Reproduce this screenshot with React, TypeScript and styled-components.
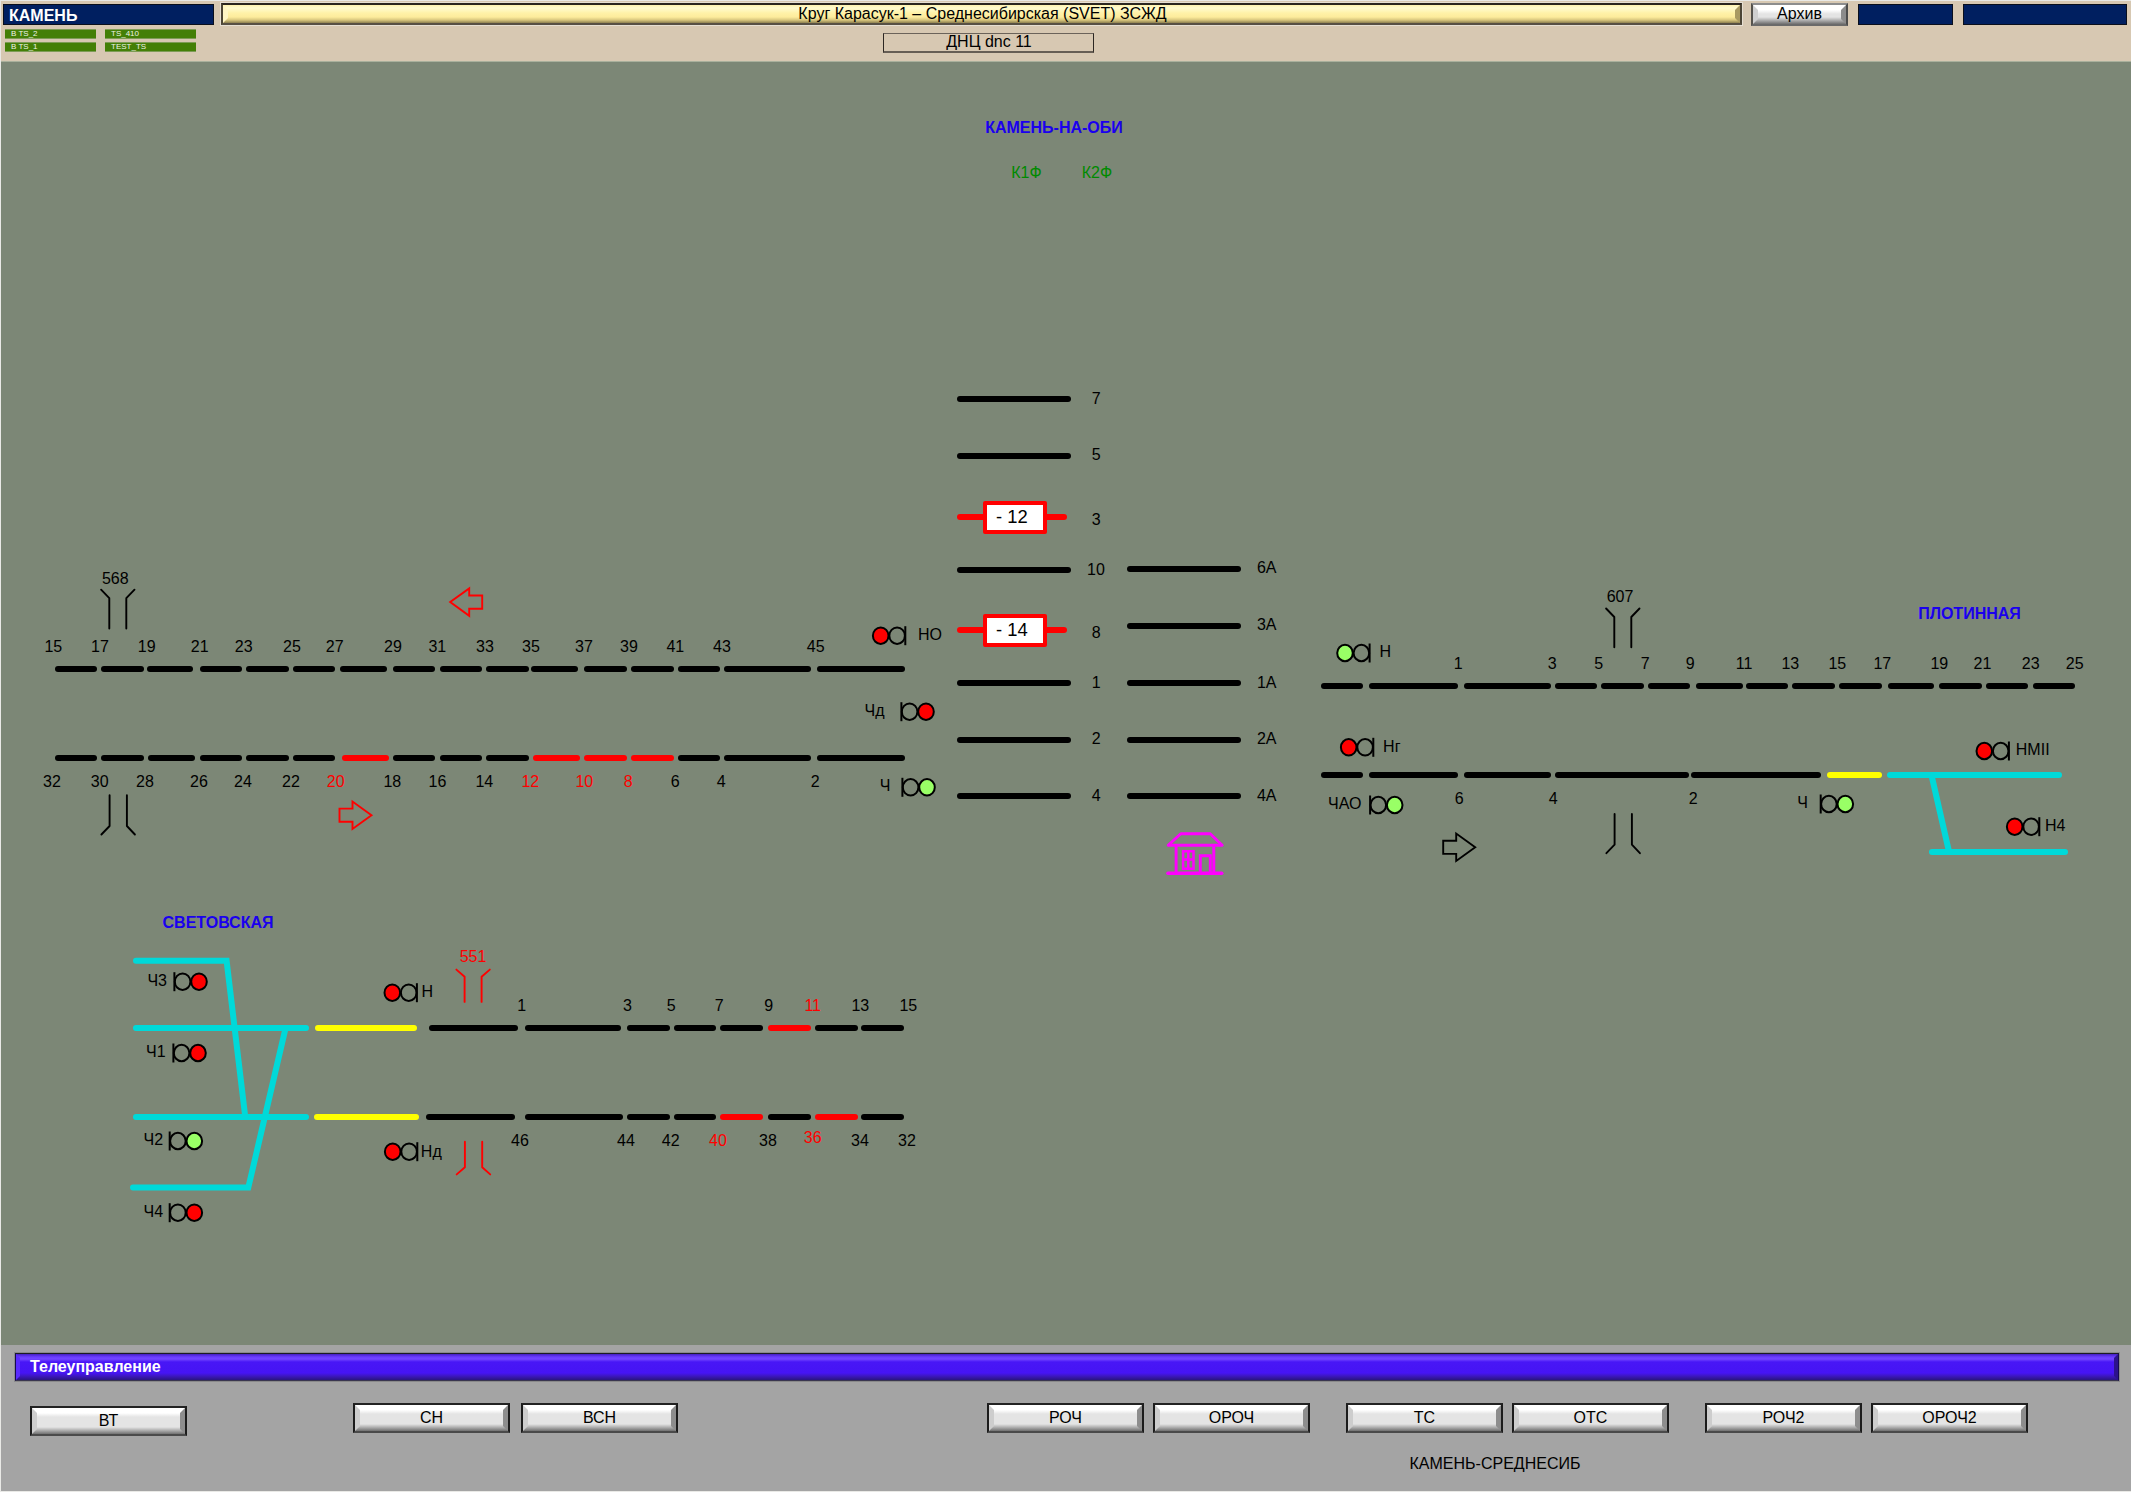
import React from 'react';
import styled, { createGlobalStyle, css } from 'styled-components';

/* ---------- palette ---------- */

const BLACK = '#000000';
const RED = '#ff0000';
const CYAN = '#00d9d9';
const YELLOW = '#ffff00';
const LIME = '#99ff66';
const FIELD = '#7c8776';
const BLUE = '#1a00ee';
const GREEN = '#008a00';
const MAGENTA = '#ff00ff';

const HEADER_HEIGHT = 62;

const GlobalStyle = createGlobalStyle`
  * { box-sizing: border-box; }
  body {
    margin: 0;
    background: #ffffff;
    font-family: "Liberation Sans", Arial, sans-serif;
    font-size: 16px;
    line-height: 18px;
    color: #000;
  }
`;

const Screen = styled.main`
  display: flex;
  flex-direction: column;
  width: 2131px;
  height: 1492px;
  overflow: hidden;
  border: solid #e9e9e6;
  border-width: 1px 0 1px 1px;
`;

/* ---------- header ---------- */

const Header = styled.header`
  display: flex;
  flex-direction: column;
  flex: none;
  height: ${HEADER_HEIGHT - 1}px;
  background: #d7c8b2;
  border-bottom: 1px solid #a9b09c;
`;

const TitleRow = styled.div`
  display: flex;
  align-items: center;
  height: 25px;
  padding: 1px 4px 0 2px;
`;

const NavyPanel = styled.div<{ $width: number; $left?: number }>`
  flex: none;
  width: ${p => p.$width}px;
  height: 21px;
  margin-left: ${p => p.$left ?? 0}px;
  padding-left: 5px;
  line-height: 21px;
  border: 1px solid #0a0f1c;
  background: #001f60;
  color: #fff;
  font-weight: bold;
  white-space: nowrap;
`;

const mitredSides = (left: string, right: string, size: number) => css`
  position: relative;
  &::before {
    content: '';
    position: absolute;
    inset: 0;
    border: ${size}px solid transparent;
    border-left-color: ${left};
    border-right-color: ${right};
    pointer-events: none;
  }
`;

const CircleTitle = styled.div`
  flex: none;
  width: 1521px;
  height: 22px;
  margin-left: 7px;
  padding-left: 2px;
  border: 2px solid #4c4535;
  border-top-color: #2b2620;
  border-bottom-color: #575044;
  outline: 1px solid #e6dfd3;
  background: linear-gradient(#fff3b0 0, #fffbd0 3px, #fff2a8 8px, #fdec9c 12px, #d9c77e 15px, #8d8050 18px);
  text-align: center;
  line-height: 17px;
  ${mitredSides('#fff6c4', '#a99a62', 5)}
`;

const bevel = css`
  border: 2px solid #1c1c1c;
  border-top-color: #222;
  border-bottom-color: #4a4a4a;
  border-radius: 0;
  background: linear-gradient(#ffffff 0, #ffffff 5px, #e4e4e4 9px, #e4e4e4 calc(100% - 7px), #b4b4b4 calc(100% - 4px), #707070 100%);
  color: #000;
  font: 16px/18px "Liberation Sans", Arial, sans-serif;
  text-align: center;
  padding: 0;
`;

const ArchiveButton = styled.button`
  ${bevel}
  ${mitredSides('#cfcfcf', '#8b8b8b', 5)}
  flex: none;
  width: 97px;
  height: 23px;
  margin-left: 9px;
  border-color: #8d8d8d #4b4b4b #6a6a6a #55524c;
`;

const StatusRow = styled.div`
  display: flex;
  align-items: flex-start;
  padding: 2px 0 0 4px;
`;

const StatusGrid = styled.div`
  display: grid;
  grid-template-columns: 91px 91px;
  grid-auto-rows: 10px;
  column-gap: 9px;
  row-gap: 3px;
  margin-top: 1px;
`;

const StatusCell = styled.div`
  height: 10px;
  padding-left: 6px;
  border: solid #7d9c55;
  border-width: 1px 0;
  background: #437f06;
  color: #eef3e6;
  font-size: 8px;
  line-height: 8px;
`;

const Dispatcher = styled.div`
  width: 211px;
  height: 20px;
  margin: 5px 0 0 687px;
  border: 1px solid #2c2722;
  border-top-color: #6b635a;
  border-bottom: 2px solid #665e54;
  padding-left: 1px;
  text-align: center;
  line-height: 16px;
`;

/* ---------- track diagram ---------- */

const Scheme = styled.section`
  position: relative;
  flex: none;
  height: 1283px;
  background: ${FIELD};
`;

const at = (x: number, y: number) => css`
  position: absolute;
  left: ${x - 1}px;
  top: ${y - HEADER_HEIGHT}px;
`;

const Track = styled.i<{ $x1: number; $x2: number; $y: number; $color: string }>`
  ${p => at(p.$x1 + 0.4, p.$y - 3)}
  width: ${p => p.$x2 - p.$x1 - 0.8}px;
  height: 6px;
  border-radius: 3px;
  background: ${p => p.$color};
`;

const Label = styled.span<{ $x: number; $base: number; $color?: string; $bold?: boolean }>`
  ${p => at(p.$x - 100, Math.round(p.$base) - 14)}
  width: 200px;
  line-height: 18px;
  text-align: center;
  white-space: nowrap;
  color: ${p => p.$color ?? BLACK};
  font-weight: ${p => (p.$bold ? 'bold' : 'normal')};
`;

const TrainBox = styled.div<{ $x: number; $y: number }>`
  ${p => at(p.$x, p.$y)}
  width: 64px;
  height: 33px;
  padding-left: 9px;
  border: 4px solid ${RED};
  border-radius: 2px;
  background: #fff;
  font-size: 18.4px;
  line-height: 23px;
  white-space: pre;
`;

const Drawing = styled.svg`
  position: absolute;
  left: -1px;
  top: 0;
  fill: none;
`;

/* ---------- remote control panel ---------- */

const Panel = styled.footer`
  display: flex;
  flex-direction: column;
  flex: 1;
  padding: 7px 11px 0 13px;
  background: #a4a4a4;
`;

const PanelTitle = styled.h2`
  flex: none;
  height: 30px;
  margin: 0;
  padding-left: 14px;
  border: 2px solid #160a50;
  border-top-color: #1c1c24;
  border-bottom-color: #3a3650;
  outline: 1px solid #8a8a8a;
  outline-offset: -1px;
  background: linear-gradient(#4420c0 0, #6a3cff 3px, #7446ff 5px, #4816f6 8px, #4614f4 19px, #3d17c0 22px, #2a1580 26px);
  color: #fff;
  font-size: 16px;
  line-height: 25px;
  ${mitredSides('#5a2bff', '#2c128c', 4)}
`;

const ButtonRow = styled.div`
  display: flex;
  align-items: flex-start;
  height: 34px;
  margin: 21px 0 0 16px;
`;

const ButtonGroup = styled.div<{ $left: number; $drop?: number; $gap?: number }>`
  display: flex;
  flex: none;
  gap: ${p => p.$gap ?? 9}px;
  margin: ${p => p.$drop ?? 0}px 0 0 ${p => p.$left}px;
`;

const CommandButton = styled.button`
  ${bevel}
  ${mitredSides('#cdcdcd', '#8d8d8d', 5)}
  flex: none;
  width: 157px;
  height: 30px;
`;

const Section = styled.div`
  width: 200px;
  margin: 18px 0 0 1381px;
  text-align: center;
`;

/* ---------- data ---------- */

type Seg = [number, number, number, string?];

const segs: Seg[] = [
  [54.7, 97.7, 668.7], [101, 144.3, 668.7], [146.7, 193.7, 669.2], [199.3, 242.3, 668.7],
  [246, 289, 668.7], [292.7, 335.3, 668.7], [340, 387.3, 669.2], [393, 435.7, 668.7],
  [439.7, 482.7, 668.7], [486, 529, 668.7], [531, 578.7, 669], [584, 627.3, 668.7],
  [630.7, 674, 668.7], [677.3, 720, 668.7], [723.7, 811.3, 668.7], [816.7, 905.7, 668.7],

  [54.7, 97.7, 758], [101, 144.3, 758], [148, 195.7, 758], [199.3, 242.3, 758],
  [246, 289, 758], [292.7, 335.3, 758], [341.7, 389.3, 758, RED], [393, 435.7, 758],
  [439.7, 482.7, 758], [486, 529, 758], [532.7, 580.7, 758, RED], [584, 627.3, 758, RED],
  [630.7, 674, 758, RED], [677.3, 720, 758], [723.7, 811.3, 758], [816.7, 905.7, 758],

  [956.3, 1071.7, 399], [956.3, 1071.7, 455.7], [956.3, 1067.7, 517, RED], [956.3, 1071.7, 570],
  [956.3, 1067.7, 630, RED], [956.3, 1071.7, 683], [956.3, 1071.7, 739.7], [956.3, 1071.7, 796.3],
  [1126.3, 1241.7, 569], [1126.3, 1241.7, 625.7], [1126.3, 1241.7, 683],
  [1126.3, 1241.7, 739.7], [1126.3, 1241.7, 796.3],

  [1320.6, 1363.3, 686.3], [1369, 1458, 686.3], [1463.3, 1551, 686.3], [1554.3, 1597.3, 686.3],
  [1600.7, 1644, 686.3], [1647.3, 1690.3, 686.3], [1696, 1743.3, 686.4], [1745.7, 1788.7, 686.3],
  [1792, 1835, 686.3], [1838.7, 1882, 686.3], [1887.3, 1934.7, 686.4], [1939, 1982, 686.3],
  [1985.7, 2028.7, 686.3], [2032.3, 2075.3, 686.3],

  [1320.6, 1363.3, 775.4], [1369, 1458, 775.4], [1463.3, 1551, 775.4], [1554.3, 1689, 775.4],
  [1690.3, 1821, 775.4], [1826.3, 1882, 775.4, YELLOW], [1886.4, 2062.4, 775.4, CYAN],
  [1928.3, 2068, 852.4, CYAN],

  [133, 309.3, 1028, CYAN], [133, 309.3, 1116.8, CYAN],
  [315, 417, 1027.8, YELLOW], [314, 419.3, 1116.8, YELLOW],
  [428.7, 518, 1027.7], [524.7, 621.7, 1028.3], [627, 670, 1027.7], [673.7, 716.7, 1027.7],
  [720, 763.3, 1027.7], [767.7, 811, 1027.7, RED], [814.7, 858, 1027.7], [861, 904.3, 1027.7],
  [426, 515.3, 1116.5], [524.7, 623.7, 1117], [627, 670, 1117], [673.7, 716.7, 1117],
  [720, 763.3, 1117, RED], [767.7, 811, 1117], [814.7, 858, 1117, RED], [861, 904.3, 1117],
];

type Text = [string, number, string?];

const labelRows: { base: number; items: Text[] }[] = [
  { base: 652, items: [['15', 53.3], ['17', 100], ['19', 146.7], ['21', 199.7], ['23', 243.7], ['25', 292], ['27', 334.7], ['29', 393], ['31', 437.3], ['33', 485], ['35', 531], ['37', 584], ['39', 629], ['41', 675.3], ['43', 722], ['45', 815.7]] },
  { base: 787, items: [['32', 52], ['30', 99.7], ['28', 145], ['26', 199], ['24', 243], ['22', 291], ['20', 335.7, RED], ['18', 392.3], ['16', 437.5], ['14', 484.3], ['12', 530.3, RED], ['10', 584.3, RED], ['8', 628.3, RED], ['6', 675.3], ['4', 721.3], ['2', 815.3]] },
  { base: 584, items: [['568', 115.3]] },
  { base: 404, items: [['7', 1096.3]] },
  { base: 460, items: [['5', 1096.3]] },
  { base: 525, items: [['3', 1096.3]] },
  { base: 575, items: [['10', 1096]] },
  { base: 638, items: [['8', 1096.3]] },
  { base: 573, items: [['6А', 1266.7]] },
  { base: 630, items: [['3А', 1266.7]] },
  { base: 688, items: [['1', 1096.3], ['1А', 1266.7]] },
  { base: 744, items: [['2', 1096.3], ['2А', 1266.7]] },
  { base: 801, items: [['4', 1096.3], ['4А', 1266.7]] },
  { base: 669, items: [['1', 1458.3], ['3', 1552.3], ['5', 1598.7], ['7', 1645.3], ['9', 1690.3], ['11', 1744], ['13', 1790.3], ['15', 1837.3], ['17', 1882.3], ['19', 1939.3], ['21', 1982.5], ['23', 2030.7], ['25', 2074.7]] },
  { base: 804, items: [['6', 1459.3], ['4', 1553.3], ['2', 1693.3]] },
  { base: 602, items: [['607', 1620]] },
  { base: 962, items: [['551', 473, RED]] },
  { base: 1011, items: [['1', 521.7], ['3', 627.5], ['5', 671.3], ['7', 719.3], ['9', 768.7], ['11', 812.7, RED], ['13', 860.3], ['15', 908.3]] },
  { base: 1146, items: [['46', 520], ['44', 626], ['42', 670.7], ['40', 718, RED], ['38', 768], ['34', 860], ['32', 907]] },
  { base: 1143, items: [['36', 812.7, RED]] },
  { base: 178, items: [['К1Ф', 1026.5, GREEN], ['К2Ф', 1097, GREEN]] },
];

const stations: [string, number, number][] = [
  ['КАМЕНЬ-НА-ОБИ', 1054, 133],
  ['ПЛОТИННАЯ', 1969.5, 619],
  ['СВЕТОВСКАЯ', 218, 928],
];

/* name, lit lamp centre x/y, side of the mast relative to the lit lamp, lamp colour, label centre x, label baseline */
type SignalData = [string, number, number, 1 | -1, string, number, number];

const signals: SignalData[] = [
  ['НО', 880.7, 635.7, 1, RED, 930, 640],
  ['Чд', 926, 711.7, -1, RED, 874.6, 716],
  ['Ч', 927, 787.3, -1, LIME, 885.2, 791],
  ['Н', 1345, 653, 1, LIME, 1385.3, 657],
  ['Нг', 1348.7, 747.3, 1, RED, 1391.8, 752],
  ['ЧАО', 1394.7, 805, -1, LIME, 1344.8, 809],
  ['НМII', 1984.3, 751, 1, RED, 2032.7, 755],
  ['Ч', 1845.3, 804, -1, LIME, 1802.5, 808],
  ['Н4', 2014.7, 826.7, 1, RED, 2055.3, 831],
  ['Ч3', 199, 981.7, -1, RED, 157.2, 986],
  ['Ч1', 198, 1053, -1, RED, 155.9, 1057],
  ['Ч2', 194.3, 1141, -1, LIME, 153.3, 1145],
  ['Ч4', 194.3, 1212.7, -1, RED, 153.3, 1217],
  ['Н', 392.3, 992.7, 1, RED, 427.4, 997],
  ['Нд', 392.7, 1151.7, 1, RED, 431.3, 1157],
];

/* ---------- drawn symbols ---------- */

const Signal = ({ x, y, side, lamp }: { x: number; y: number; side: 1 | -1; lamp: string }) => (
  <g stroke={BLACK} strokeWidth={2}>
    <ellipse cx={x + side * 16.4} cy={y} rx={7.8} ry={8.2} />
    <path d={`M${x + side * 24.6} ${y - 9.5}v19`} />
    <ellipse cx={x} cy={y} rx={7.8} ry={8.2} fill={lamp} />
  </g>
);

const Arrow = ({ x, y, dir, color }: { x: number; y: number; dir: 1 | -1; color: string }) => (
  <path
    d={`M${x} ${y - 6.6}h${dir * 13}v-7.1l${dir * 19} 13.7l${-dir * 19} 13.7v-7.1h${-dir * 13}z`}
    stroke={color}
    strokeWidth={1.9}
  />
);

const Crossing = ({ x, top, bottom, stem, flare, color }: { x: number; top: number; bottom: number; stem: number; flare: number; color: string }) => (
  <g stroke={color} strokeWidth={1.9} strokeLinecap="round" strokeLinejoin="round">
    <path d={`M${x} ${top}l8.2 ${flare}v${stem - 0.7}M${x + 33.4} ${top}l-8.2 ${flare}v${stem - 0.7}`} />
    <path d={`M${x + 8.5} ${bottom}v${stem - 0.3}l-8.2 ${flare}M${x + 25.8} ${bottom}v${stem - 0.3}l8 ${flare}`} />
  </g>
);

const House = () => (
  <g stroke={MAGENTA} strokeWidth={2.9}>
    <path d="M1168.2 845.2L1180.7 833.8H1210.2L1222.2 845.2Z" strokeLinejoin="round" />
    <path d="M1176.1 845V873M1213.8 845V873" />
    <path d="M1168 873.3H1221.7" strokeWidth={3.6} strokeLinecap="round" />
    <path d="M1183.1 851.2H1193.5V868.8H1183.1ZM1188.3 851V869M1183 859.5H1194" strokeWidth={2.5} />
    <path d="M1200.3 873V855.8H1210.3V873" />
  </g>
);

/* ---------- page ---------- */

const commandGroups: { left: number; drop?: number; gap?: number; names: string[] }[] = [
  { left: 0, drop: 3, names: ['ВТ'] },
  { left: 166, gap: 11, names: ['СН', 'ВСН'] },
  { left: 309, names: ['РОЧ', 'ОРОЧ'] },
  { left: 36, names: ['ТС', 'ОТС'] },
  { left: 36, names: ['РОЧ2', 'ОРОЧ2'] },
];

export default function App() {
  return (
    <>
      <GlobalStyle />
      <Screen>
        <Header>
          <TitleRow>
            <NavyPanel $width={211}>КАМЕНЬ</NavyPanel>
            <CircleTitle>Круг Карасук-1 – Среднесибирская (SVET) ЗСЖД</CircleTitle>
            <ArchiveButton>Архив</ArchiveButton>
            <NavyPanel $width={95} $left={10} />
            <NavyPanel $width={164} $left={10} />
          </TitleRow>
          <StatusRow>
            <StatusGrid>
              <StatusCell>B TS_2</StatusCell>
              <StatusCell>TS_410</StatusCell>
              <StatusCell>B TS_1</StatusCell>
              <StatusCell>TEST_TS</StatusCell>
            </StatusGrid>
            <Dispatcher>ДНЦ dnc 11</Dispatcher>
          </StatusRow>
        </Header>

        <Scheme>
          {segs.map(([x1, x2, y, color], i) => (
            <Track key={i} $x1={x1} $x2={x2} $y={y} $color={color ?? BLACK} />
          ))}
          <Drawing width={2131} height={1283} viewBox={`0 ${HEADER_HEIGHT} 2131 1283`}>
            <g stroke={CYAN} strokeWidth={6} strokeLinecap="round" strokeLinejoin="miter">
              <path d="M136 960.8H226.6L245.2 1116.5" />
              <path d="M133 1187.6H248.3L285.6 1028" />
              <path d="M1931.7 776L1949.1 852" />
            </g>
            <Crossing x={101.1} top={589.7} bottom={795.3} stem={31} flare={8.5} color={BLACK} />
            <Crossing x={1606.1} top={608.5} bottom={814} stem={31} flare={8.5} color={BLACK} />
            <Crossing x={456.4} top={969.6} bottom={1141.7} stem={25.8} flare={7.2} color={RED} />
            <Arrow x={482.2} y={602.1} dir={-1} color={RED} />
            <Arrow x={339.5} y={815.2} dir={1} color={RED} />
            <Arrow x={1443.2} y={847.3} dir={1} color={BLACK} />
            {signals.map(([name, x, y, side, lamp]) => (
              <Signal key={name + x} x={x} y={y} side={side} lamp={lamp} />
            ))}
            <House />
          </Drawing>
          <TrainBox $x={983} $y={501}>- 12</TrainBox>
          <TrainBox $x={983} $y={614}>- 14</TrainBox>
          {labelRows.map(row =>
            row.items.map(([text, x, color]) => (
              <Label key={text + x} $x={x} $base={row.base} $color={color}>{text}</Label>
            ))
          )}
          {signals.map(([name, , , , , x, base]) => (
            <Label key={name + x} $x={x} $base={base}>{name}</Label>
          ))}
          {stations.map(([name, x, base]) => (
            <Label key={name} $x={x} $base={base} $color={BLUE} $bold>{name}</Label>
          ))}
        </Scheme>

        <Panel>
          <PanelTitle>Телеуправление</PanelTitle>
          <ButtonRow>
            {commandGroups.map(group => (
              <ButtonGroup key={group.names[0]} $left={group.left} $drop={group.drop} $gap={group.gap}>
                {group.names.map(name => (
                  <CommandButton key={name}>{name}</CommandButton>
                ))}
              </ButtonGroup>
            ))}
          </ButtonRow>
          <Section>КАМЕНЬ-СРЕДНЕСИБ</Section>
        </Panel>
      </Screen>
    </>
  );
}
